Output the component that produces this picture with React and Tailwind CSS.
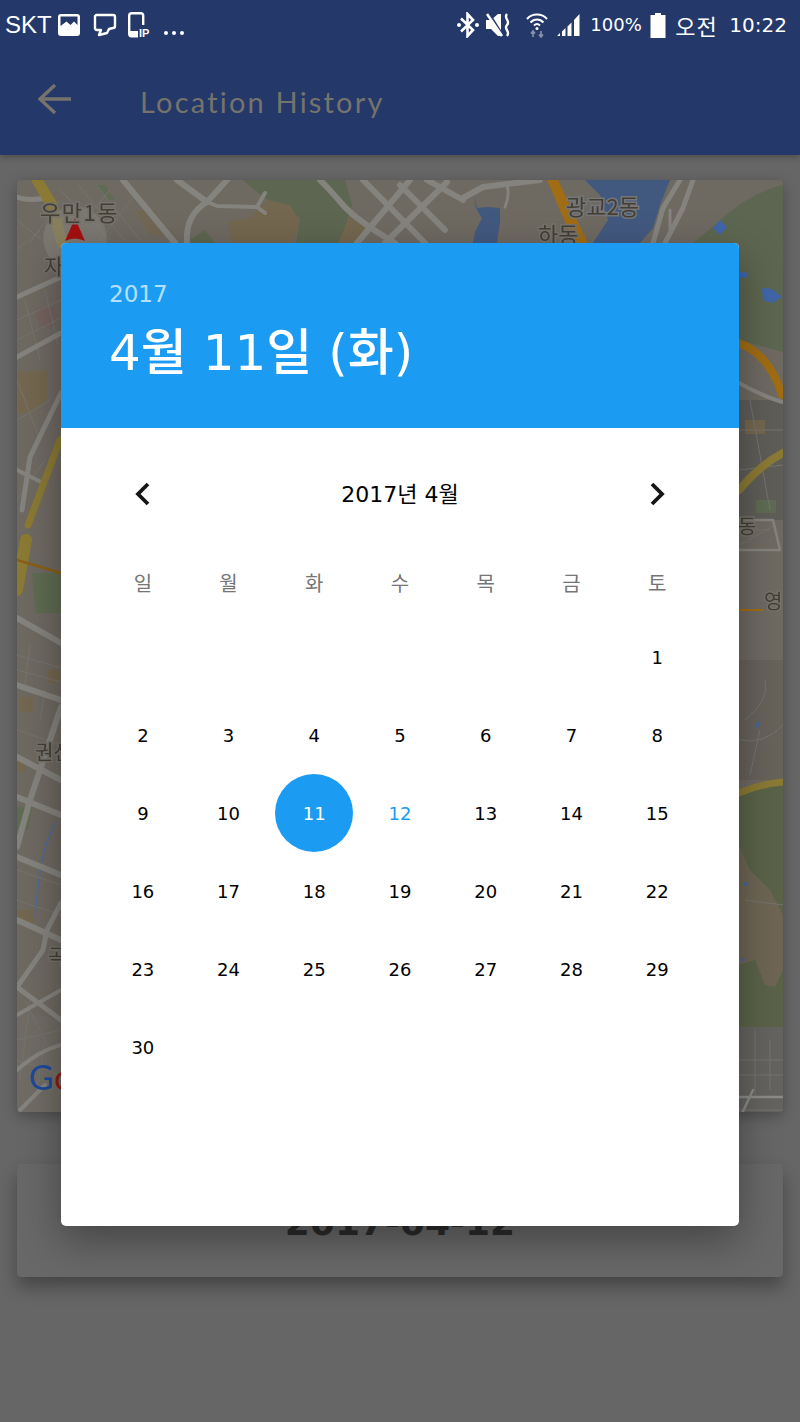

import React from "react";

const dig = "font-['DejaVu_Sans','Noto_Sans_CJK_KR',sans-serif]";

function StatusLeft() {
  return (
    <div className="flex items-center">
      <span className="font-['Liberation_Sans',sans-serif] text-[24px] leading-none text-white ml-[5px] w-[53px]">SKT</span>
      <svg width="22" height="22" viewBox="0 0 22 22" className="mr-[13px]">
        <rect x="0" y="0" width="22" height="22" rx="3" fill="#fff" />
        <path d="M2.5 2.5H19.5V11L16 7.500 12.5 11 8.500 7.500 2.500 12Z" fill="#24386a" />
      </svg>
      <svg width="24" height="24" viewBox="0 0 24 24" className="mr-[11px]">
        <path d="M3 2H20Q22 2 22 4V13Q22 15 20 15L16 16 14 20 6 22 8 17H4Q2 17 2 15V3Z" fill="none" stroke="#fff" strokeWidth="2.400" strokeLinejoin="round" />
      </svg>
      <svg width="24" height="26" viewBox="0 0 24 26" className="mr-[11px]">
        <rect x="1.200" y="1.200" width="14" height="23" rx="2.500" fill="none" stroke="#fff" strokeWidth="2.400" />
        <rect x="1" y="19" width="15" height="6" rx="1" fill="#fff" />
        <rect x="10" y="13" width="14" height="13" fill="#24386a" />
        <text x="11" y="25" fontSize="11" fontWeight="700" fill="#fff" fontFamily="Liberation Sans">IP</text>
      </svg>
      <svg width="22" height="6" viewBox="0 0 22 6" className="mt-[15px]">
        <circle cx="3" cy="3" r="2" fill="#fff" />
        <circle cx="11" cy="3" r="2" fill="#fff" />
        <circle cx="19" cy="3" r="2" fill="#fff" />
      </svg>
    </div>
  );
}

function StatusRight() {
  return (
    <div className="flex items-center mr-[13px] text-white">
      <svg width="24" height="26" viewBox="0 0 24 26" className="mr-[6px]">
        <path d="M5 6.500 17 18 11.500 24V2L17 8 5 19.500" fill="none" stroke="#fff" strokeWidth="2.600" />
        <circle cx="3" cy="13" r="2" fill="#fff" />
        <circle cx="21" cy="13" r="2" fill="#fff" />
      </svg>
      <svg width="27" height="26" viewBox="0 0 27 26" className="mr-[13px]">
        <path d="M0 8H5L12 2H15V24H12L5 17H0Z" fill="#fff" />
        <path d="M3 1 18 25" stroke="#24386a" strokeWidth="2" />
        <path d="M1 2 16 24" stroke="#fff" strokeWidth="2.600" />
        <path d="M21 2C17 6 25 9 21 13 17 17 25 19 21 24" fill="none" stroke="#fff" strokeWidth="2.400" />
      </svg>
      <svg width="22" height="26" viewBox="0 0 22 26" className="mr-[9px]">
        <path d="M1 7C6 1 16 1 21 7" fill="none" stroke="#fff" strokeWidth="2" />
        <path d="M4.500 10.500C8 6.500 14 6.500 17.500 10.500" fill="none" stroke="#fff" strokeWidth="2" />
        <path d="M8 13.500C10 11.500 12 11.500 14 13.500" fill="none" stroke="#fff" strokeWidth="2" />
        <circle cx="11" cy="16.500" r="1.500" fill="#fff" />
        <path d="M7 25V20M5 21.500 7 19 9 21.500M15 19V24M13 22.500 15 25 17 22.500" fill="none" stroke="#8b93a8" strokeWidth="1.600" />
      </svg>
      <svg width="24" height="24" viewBox="0 0 24 24" className="mr-[9px]">
        <path d="M0 23H3V20L0 23Z M5 23H8.500V15L5 18.500Z M10.500 23H14.500V9.500L10.500 13.500Z M17 23H22.500V1L17 7Z" fill="#fff" />
      </svg>
      <span className={`${dig} text-[18px] leading-none w-[60px]`}>100%</span>
      <svg width="16" height="25" viewBox="0 0 16 25" className="mr-[9px]">
        <path d="M5 0H11V2H15.500V25H0.500V2H5Z" fill="#fff" />
      </svg>
      <span className="font-['Noto_Sans_CJK_KR',sans-serif] text-[22px] leading-none tracking-[1px] w-[54px]">오전</span>
      <span className={`${dig} text-[20px] leading-none`}>10:22</span>
    </div>
  );
}

function Road({ d, w = 6, c = "#85837e" }) {
  return <path d={d} fill="none" stroke={c} strokeWidth={w} strokeLinejoin="round" strokeLinecap="round" />;
}

function MapLabel({ x, y, size = 22, spacing = 0, children, halo = "#76736d" }) {
  return (
    <text x={x} y={y} fontSize={size} letterSpacing={spacing} fill="#443f33" stroke={halo} strokeWidth="3" paintOrder="stroke" fontFamily="Noto Sans CJK KR, sans-serif">
      {children}
    </text>
  );
}

function MapCanvas() {
  return (
    <svg viewBox="17 180 766 932" className="block h-full w-full blur-[0.7px]">
      <rect x="17" y="180" width="766" height="932" fill="#6e6961" />
      {/* terrain */}
      <path d="M243 180 345 180 352 205 340 243 296 243 300 218 262 196Z" fill="#5d6650" />
      <path d="M268 200 290 205 300 222 292 243 232 243 228 222 250 218Z" fill="#74674f" />
      <path d="M352 212 368 228 352 243 338 243Z" fill="#74674f" />
      <path d="M185 243 205 230 215 243Z" fill="#5d6650" />
      <path d="M782 185Q745 195 715 225L693 243H739V340L783 352V185Z" fill="#5d6650" />
      <path d="M32 573H61V613H36Z" fill="#5f6b52" />
      <path d="M17 807H32L28 830H17Z" fill="#5f6b52" />
      <path d="M35 307H55V327H40Z" fill="#74625d" />
      <path d="M18 372 47 370V400L30 413H18Z" fill="#74674f" />
      <path d="M47 670H60V683H47ZM20 697H33V712H20ZM17 910H33V923H17ZM17 760H26V772H17Z" fill="#74674f" />
      <path d="M135 210H155L165 235H150Z" fill="#74674f" opacity=".7" />
      <path d="M95 185H105L115 200H108Z" fill="#5f6b52" />
      <path d="M739 793Q760 782 783 780V1027H739Z" fill="#5a6348" />
      <path d="M739 845 750 870 770 890 783 915V970L775 987 765 985 755 960 739 965Z" fill="#6e6554" />
      <rect x="739" y="1027" width="44" height="85" fill="#646360" />
      <path d="M61 1112V1020L17 1010V1112Z" fill="#706c65" />
      <rect x="739" y="660" width="44" height="120" fill="#67625a" />
      <rect x="739" y="400" width="44" height="120" fill="#5f5d58" />
      <rect x="756" y="500" width="20" height="13" fill="#5f6b52" />
      <rect x="745" y="420" width="20" height="14" fill="#74674f" />
      {/* water */}
      <path d="M585 180H670L660 205 653 228 640 243H593L608 220 600 195Z" fill="#42597f" />
      <path d="M474 195 477 208 488 207 500 208 500 222 497 243H473L475 232 482 218 476 208Z" fill="#42597f" />
      <path d="M713 228 720 220 727 227 720 235Z" fill="#3f66a8" />
      <path d="M762 288 772 289 782 297 772 303 763 300Z" fill="#3f66a8" />
      <rect x="739" y="272" width="8" height="6" rx="2" fill="#3f66a8" />
      <path d="M755 726 759 721 760 724 757 728Z M744 884 747 881 748 884 745 887Z M740 960 745 957 743 962Z" fill="#3f66a8" />
      <path d="M55 823Q45 845 42 860T35 917" fill="none" stroke="#4f6a9e" strokeWidth="1.400" />
      {/* minor streets */}
      <g fill="none" stroke="#767470" strokeWidth="1">
        <path d="M60 190 110 240M78 185 125 240M95 183 140 240M50 205 85 243M17 220 45 243M110 190 75 230M135 195 100 240M60 200 30 243M17 250 40 230" />
        <path d="M17 320 61 300M17 340 61 318M25 300 40 360M45 290 58 345M17 420 50 400M17 380 40 440M17 500 45 460" />
        <path d="M17 655 61 668M17 670 61 682M30 645 25 685M45 690 40 720M17 730 61 745M17 870 61 885M17 900 61 915M25 1000 50 1050M17 1040 61 1030M17 1060 61 1075M30 1000 20 1080M45 1040 35 1100" />
        <path d="M745 720Q770 700 765 680M739 740Q765 745 783 725M760 730 750 775M739 1060H783M755 1030V1097M739 1075H783M770 1040V1090M745 900 783 905M739 1110H783" />
        <path d="M739 430H783M750 400 770 510M739 470 783 465M775 525 740 545M745 530H770" />
      </g>
      {/* major roads */}
      <Road d="M17 197Q30 202 50 197" w={5} />
      <Road d="M123 180 175 243" w={6} />
      <Road d="M177 180 207 202 227 180" w={6} />
      <Road d="M207 202Q185 215 187 243" w={6} />
      <Road d="M207 202 217 206 257 207 265 193M257 207 265 213" w={4} />
      <Road d="M320 180Q330 190 343 205T395 243" w={6} />
      <Road d="M363 180 425 243M410 180 357 243M447 182 385 243M427 180 463 200M400 185 445 230" w={6} />
      <Road d="M463 198 483 187 540 180" w={6} />
      <Road d="M507 185Q510 195 505 207" w={3} />
      <Road d="M680 180 663 208 653 243M693 180 683 208 665 243" w={5} />
      <Road d="M670 210V230" w={3} />
      <Road d="M17 297 61 277M17 357 61 333M61 393 30 457 22 510" w={5} />
      <Road d="M17 470 43 483" w={4} />
      <Road d="M17 618 61 643M17 685 61 700M17 757 61 780M17 797 61 815M17 857 61 875M17 920 61 940" w={6} />
      <Road d="M61 707 30 800 17 847" w={6} />
      <Road d="M61 903 47 930 43 950 17 987 61 1020" w={5} />
      <Road d="M17 1015 61 990M17 1070Q40 1050 61 1045M20 1110 45 1085" w={4} />
      <Road d="M739 383Q760 395 782 402" w={4} />
      <Road d="M739 520H773L780 550H739" w={2.500} />
      <Road d="M739 1120 753 1090M739 1097H783" w={2.500} c="#8b8b88" />
      <Road d="M37 180 52 205 62 243" w={11} c="#8a7a34" />
      <Road d="M60 440 28 525" w={7} c="#8a7a34" />
      <Road d="M26 540 17 590" w={12} c="#8a7a34" />
      <Road d="M17 560 61 573" w={2.500} c="#8a5f14" />
      <Road d="M739 343Q770 355 782 395" w={8} c="#a06c14" />
      <Road d="M739 490Q760 465 783 453" w={8} c="#8a7a34" />
      <Road d="M739 610H763" w={2} c="#a06c14" />
      <Road d="M739 793Q760 784 783 782" w={7} c="#8a7a34" />
      <path d="M547 180H558L588 243H574Z" fill="#a06c14" />
      {/* compass */}
      <circle cx="75" cy="238" r="32" fill="#86857f" fillOpacity=".55" stroke="#716f6a" />
      <path d="M75 218 65 241Q75 236 85 241Z" fill="#a40f10" />
      {/* labels */}
      <MapLabel x="40" y="221" size="22" spacing="1.500">우만1동</MapLabel>
      <MapLabel x="44" y="274" size="21">자</MapLabel>
      <MapLabel x="566" y="215" size="22" halo="#75767a">광교2동</MapLabel>
      <MapLabel x="538" y="243" size="22">하동</MapLabel>
      <MapLabel x="35" y="760" size="20">권선</MapLabel>
      <MapLabel x="48" y="964" size="20">곡</MapLabel>
      <MapLabel x="738" y="534" size="20">동</MapLabel>
      <MapLabel x="764" y="609" size="20">영</MapLabel>
      <text x="29" y="1090" fontSize="34" fill="#1c4a9c" fontFamily="Lato, sans-serif">G</text>
      <text x="54" y="1090" fontSize="34" fill="#8e1a12" fontFamily="Lato, sans-serif">o</text>
    </svg>
  );
}

const weekdays = ["일", "월", "화", "수", "목", "금", "토"];
const days = [null, null, null, null, null, null, ...Array.from({ length: 30 }, (_, i) => i + 1)];

function DayCell({ day }) {
  if (day === 11) {
    return (
      <div className="flex h-[78px] items-center justify-center">
        <div className="flex h-[78px] w-[78px] items-center justify-center rounded-full bg-[#1c9bf3] text-white">11</div>
      </div>
    );
  }
  return (
    <div className={`flex h-[78px] items-center justify-center ${day === 12 ? "text-[#1c9bf3]" : "text-black"}`}>
      {day}
    </div>
  );
}

function DatePicker() {
  return (
    <div className="absolute left-[61px] top-[243px] flex h-[983px] w-[678px] flex-col overflow-hidden rounded-[5px] bg-white shadow-[0_14px_40px_rgba(0,0,0,0.35)]">
      <div className="h-[185px] bg-[#1c9bf3] pl-[48px] pt-[36px] text-white">
        <div className={`${dig} text-[23px] leading-[30px] text-[#b5e0fb]`}>2017</div>
        <div className={`${dig} mt-[9px] text-[50px] font-medium leading-[70px]`}>4월 11일 (화)</div>
      </div>
      <div className="flex flex-1 flex-col px-[39px]">
        <div className="mt-[38px] flex h-[56px] items-center justify-between px-[36px]">
          <svg width="20" height="26" viewBox="0 0 20 26" className="ml-[-2px]">
            <path d="M14 3 4 13 14 23" fill="none" stroke="#151515" strokeWidth="3.800" />
          </svg>
          <div className={`${dig} text-[22px] text-black`}>2017년 4월</div>
          <svg width="20" height="26" viewBox="0 0 20 26" className="mr-[-2px]">
            <path d="M6 3 16 13 6 23" fill="none" stroke="#151515" strokeWidth="3.800" />
          </svg>
        </div>
        <div className="mt-[41px] grid h-[40px] grid-cols-7 items-center">
          {weekdays.map((w) => (
            <div key={w} className="text-center font-['Noto_Sans_CJK_KR',sans-serif] text-[20px] text-[#757575]">{w}</div>
          ))}
        </div>
        <div className={`${dig} mt-[15px] grid grid-cols-7 text-[18px]`}>
          {days.map((d, i) => (
            <DayCell key={i} day={d} />
          ))}
        </div>
      </div>
    </div>
  );
}

export default function App() {
  return (
    <div className="relative h-[1422px] w-[800px] overflow-hidden bg-[#666666]">
      <header className="relative z-10 h-[155px] bg-[#24386a] shadow-[0_2px_6px_rgba(0,0,0,0.25)]">
        <div className="flex h-[50px] items-center justify-between">
          <StatusLeft />
          <StatusRight />
        </div>
        <div className="flex h-[105px] items-center">
          <svg width="34" height="32" viewBox="0 0 34 32" className="ml-[38px] mb-[8px]">
            <path d="M17 2 2 16 17 30M2 16H33" fill="none" stroke="#75736c" strokeWidth="3.400" />
          </svg>
          <span className="ml-[68px] mb-[2px] font-['Lato',sans-serif] text-[29px] tracking-[2.200px] text-[#75736c]">Location History</span>
        </div>
      </header>
      <main className="px-[17px] pt-[25px]">
        <div className="h-[932px] overflow-hidden rounded-[4px] shadow-[0_4px_14px_rgba(0,0,0,0.28)]">
          <MapCanvas />
        </div>
        <div className="mt-[52px] flex h-[113px] items-center justify-center rounded-[4px] bg-[#686868] shadow-[0_10px_18px_rgba(0,0,0,0.32)]">
          <span className={`${dig} mt-[5px] text-[36px] font-bold leading-none text-[#2b2b2b]`}>2017-04-12</span>
        </div>
      </main>
      <DatePicker />
    </div>
  );
}
